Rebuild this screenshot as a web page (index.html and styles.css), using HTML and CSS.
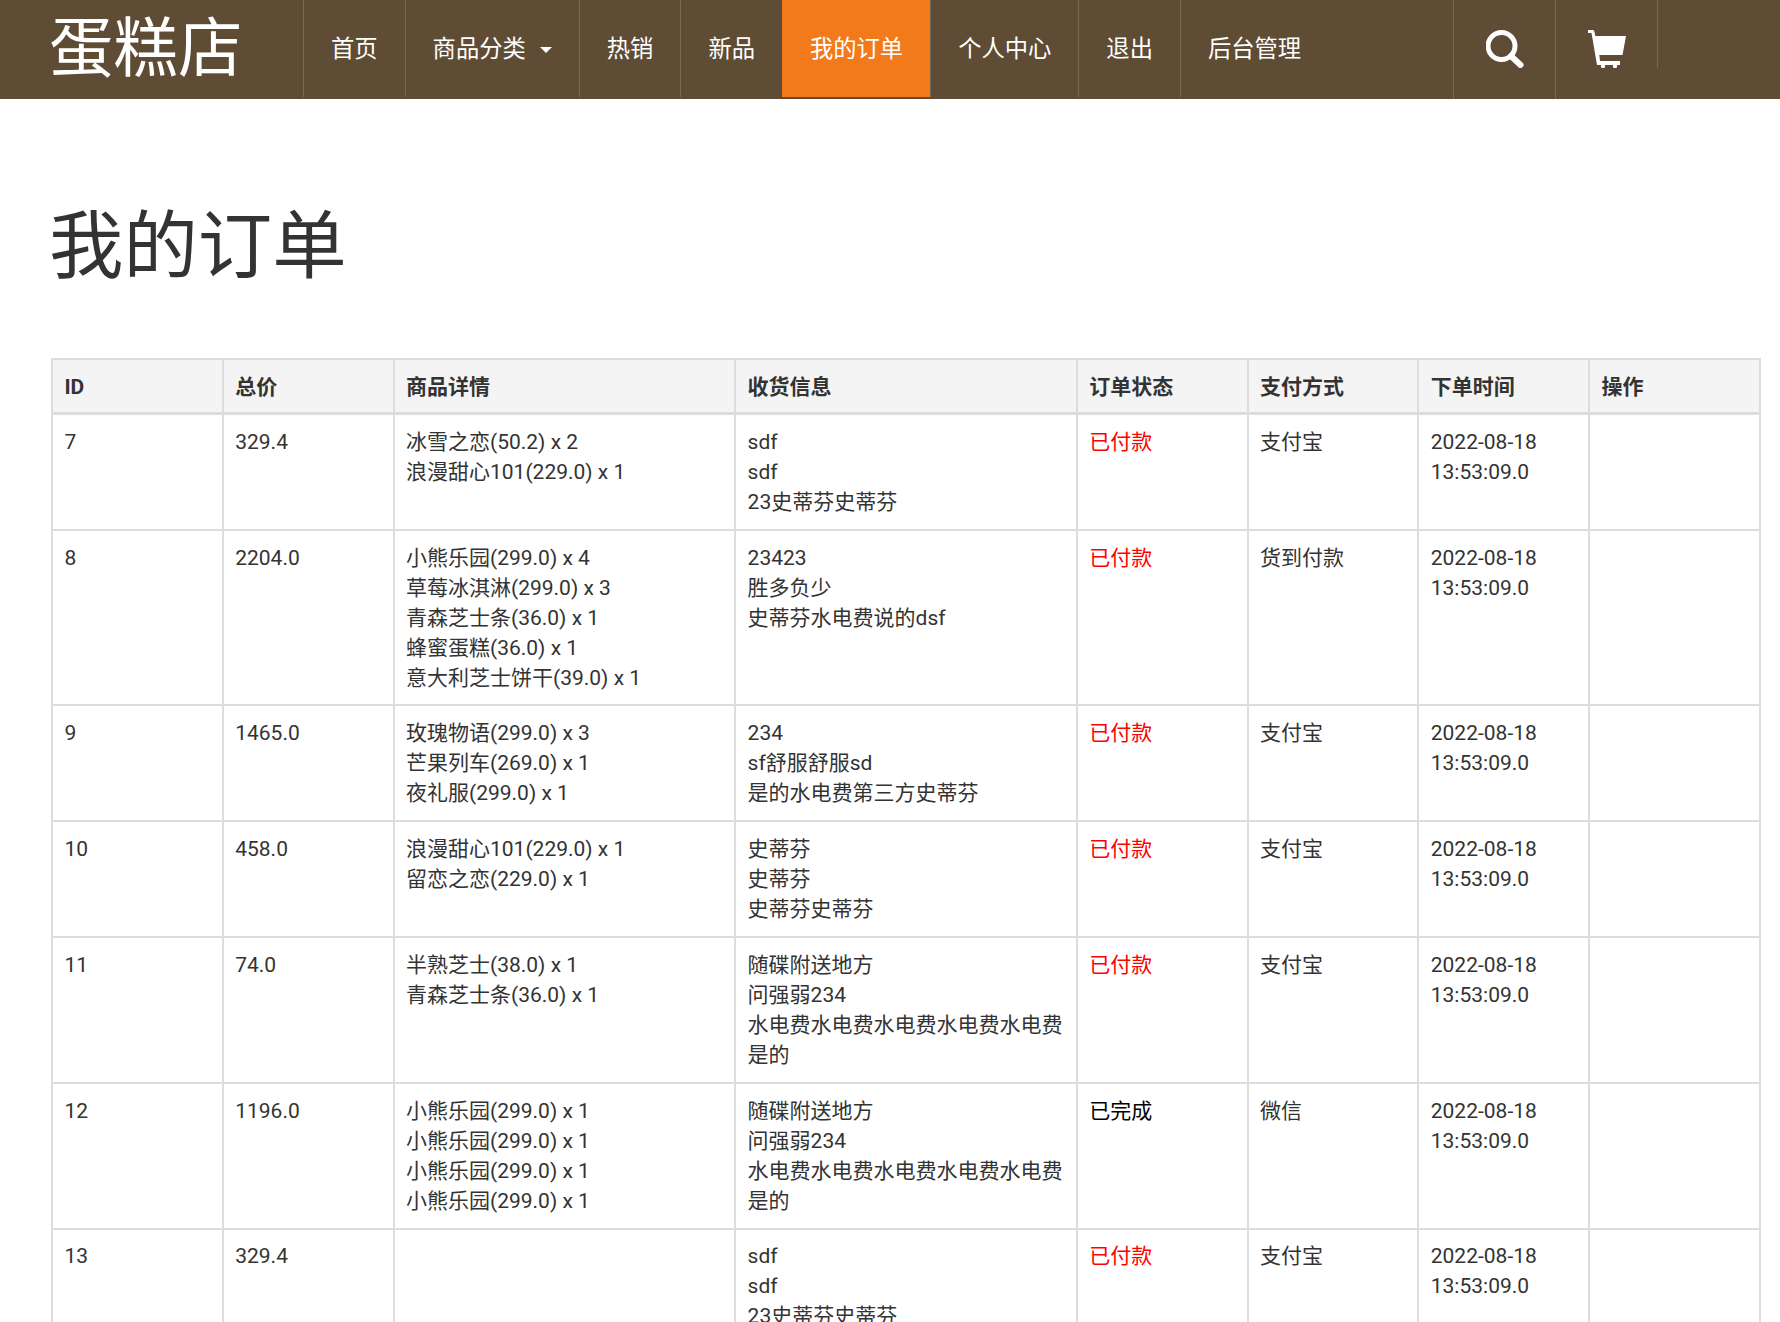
FILE: index.html
```html
<!DOCTYPE html>
<html lang="zh">
<head>
<meta charset="utf-8">
<title>我的订单</title>
<link rel="stylesheet" href="styles.css">
</head>
<body>
<header class="navbar">
  <a class="brand">蛋糕店</a>
  <nav class="menu">
    <a class="item">首页</a>
    <a class="item">商品分类<span class="caret"></span></a>
    <a class="item">热销</a>
    <a class="item">新品</a>
    <a class="item active">我的订单</a>
    <a class="item">个人中心</a>
    <a class="item">退出</a>
    <a class="item">后台管理</a>
  </nav>
  <div class="tools">
    <a class="tool"><svg class="icon" width="38" height="38" viewBox="0 0 38 38"><circle cx="15.500" cy="16" r="13.500" fill="none" stroke="#fff" stroke-width="5"/><path d="M25 26l9.500 9" stroke="#fff" stroke-width="6" stroke-linecap="round" fill="none"/></svg></a>
    <a class="tool"><svg class="icon" width="38" height="38" viewBox="0 0 38 38"><path d="M0 0H5Q6 0 6.500 2L7.300 6H38L34.500 25H11.300L12 31H32V35H9L3.500 3H0Z" fill="#fff"/><circle cx="15" cy="36" r="2.200" fill="#fff"/><circle cx="27" cy="36" r="2.200" fill="#fff"/></svg></a>
    <span class="tool-end"></span>
  </div>
</header>
<main class="content">
  <h1 class="title">我的订单</h1>
  <table class="orders">
    <colgroup><col class="c1"><col class="c1"><col class="c2"><col class="c2"><col class="c1"><col class="c1"><col class="c1"><col class="c1"></colgroup>
    <thead>
      <tr><th>ID</th><th>总价</th><th>商品详情</th><th>收货信息</th><th>订单状态</th><th>支付方式</th><th>下单时间</th><th>操作</th></tr>
    </thead>
    <tbody>
      <tr><td>7</td><td>329.4</td><td>冰雪之恋(50.2) x 2<br>浪漫甜心101(229.0) x 1</td><td>sdf<br>sdf<br>23史蒂芬史蒂芬</td><td class="paid">已付款</td><td>支付宝</td><td>2022-08-18 13:53:09.0</td><td></td></tr>
      <tr><td>8</td><td>2204.0</td><td>小熊乐园(299.0) x 4<br>草莓冰淇淋(299.0) x 3<br>青森芝士条(36.0) x 1<br>蜂蜜蛋糕(36.0) x 1<br>意大利芝士饼干(39.0) x 1</td><td>23423<br>胜多负少<br>史蒂芬水电费说的dsf</td><td class="paid">已付款</td><td>货到付款</td><td>2022-08-18 13:53:09.0</td><td></td></tr>
      <tr><td>9</td><td>1465.0</td><td>玫瑰物语(299.0) x 3<br>芒果列车(269.0) x 1<br>夜礼服(299.0) x 1</td><td>234<br>sf舒服舒服sd<br>是的水电费第三方史蒂芬</td><td class="paid">已付款</td><td>支付宝</td><td>2022-08-18 13:53:09.0</td><td></td></tr>
      <tr><td>10</td><td>458.0</td><td>浪漫甜心101(229.0) x 1<br>留恋之恋(229.0) x 1</td><td>史蒂芬<br>史蒂芬<br>史蒂芬史蒂芬</td><td class="paid">已付款</td><td>支付宝</td><td>2022-08-18 13:53:09.0</td><td></td></tr>
      <tr><td>11</td><td>74.0</td><td>半熟芝士(38.0) x 1<br>青森芝士条(36.0) x 1</td><td>随碟附送地方<br>问强弱234<br>水电费水电费水电费水电费水电费是的</td><td class="paid">已付款</td><td>支付宝</td><td>2022-08-18 13:53:09.0</td><td></td></tr>
      <tr><td>12</td><td>1196.0</td><td>小熊乐园(299.0) x 1<br>小熊乐园(299.0) x 1<br>小熊乐园(299.0) x 1<br>小熊乐园(299.0) x 1</td><td>随碟附送地方<br>问强弱234<br>水电费水电费水电费水电费水电费是的</td><td class="done">已完成</td><td>微信</td><td>2022-08-18 13:53:09.0</td><td></td></tr>
      <tr><td>13</td><td>329.4</td><td></td><td>sdf<br>sdf<br>23史蒂芬史蒂芬</td><td class="paid">已付款</td><td>支付宝</td><td>2022-08-18 13:53:09.0</td><td></td></tr>
    </tbody>
  </table>
</main>
</body>
</html>
```
FILE: styles.css
```css
* { box-sizing: border-box; }
html, body { margin: 0; padding: 0; height: 1322px; overflow: hidden; background: #fff; }
body { font-family: Roboto, "Noto Sans CJK SC", sans-serif; font-size: 21px; line-height: 30px; color: #333; }
.navbar { display: flex; height: 99px; background: #5e4c34; color: #fff; padding-left: 49px; }
.brand { width: 254px; font-size: 64.5px; line-height: 98px; }
.menu { display: flex; height: 97px; }
.item { display: flex; align-items: center; padding: 2px 27px 0; border-left: 1px solid #786a50; font-size: 23.3px; line-height: 95px; }
.item.active { background: #f37a1a; border-left-color: #f37a1a; }
.caret { margin-left: 14px; width: 0; height: 0; border-left: 6px solid transparent; border-right: 6px solid transparent; border-top: 6px solid #fff; }
.tools { display: flex; margin-left: auto; height: 99px; margin-right: 122px; }
.tool { width: 102px; display: flex; align-items: center; justify-content: center; padding-bottom: 2px; border-left: 1px solid #786a50; }
.tool-end { border-left: 1px solid #786a50; height: 68px; }
.content { padding: 0 19px 0 49px; }
.title { margin: 107px 0 71px; font-size: 74.4px; line-height: 81px; font-weight: 400; color: #333; }
.orders { width: 1710px; margin-left: 2px; border-collapse: collapse; table-layout: fixed; }
.c1 { width: 10%; }
.c2 { width: 20%; }
.orders th, .orders td { border: 2px solid #ddd; padding: 11.900px 11.400px; text-align: left; vertical-align: top; }
.orders th { background: #f4f4f4; padding-bottom: 10px; border-bottom-width: 3px; font-weight: 700; }
.paid { color: #f00; }
.done { color: #000; }
```
